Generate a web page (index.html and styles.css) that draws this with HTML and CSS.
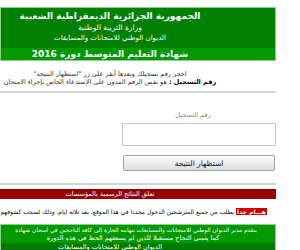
FILE: index.html
```html
<!DOCTYPE html>
<html lang="ar" dir="rtl">
<head>
  <meta charset="UTF-8">
  <title>نتائج شهادة التعليم المتوسط 2016</title>
  <link rel="stylesheet" href="styles.css">
</head>
<body>
  <div class="page">

    <!-- رأس الصفحة -->
    <div class="head">
      <div class="head-top">
        <div class="head-line strong">الجمهورية الجزائرية الديمقراطية الشعبية</div>
        <div class="head-line">وزارة التربية الوطنية</div>
        <div class="head-line small">الديوان الوطني للامتحانات والمسابقات</div>
      </div>
      <div class="head-title">شهادة التعليم المتوسط دورة 2016</div>
    </div>

    <div class="intro">
      <div>احجز رقم تسجيلك وبعدها أنقر على زر "استظهار النتيجة"</div>
      <div><b>رقم التسجيل :</b> هو نفس الرقم المدون على الإستدعاء الخاص بإجراء الامتحان</div>
    </div>

    <div class="sep"></div>

    <!-- البحث -->
    <form class="lookup" onsubmit="return false;">
      <label class="lookup-label" for="regNum">رقم التسجيل</label>
      <input type="text" id="regNum" class="lookup-input">
      <button class="lookup-btn">استظهار النتيجة</button>
    </form>

    <div class="sep"></div>

    <div class="notice-bar">تعلق النتائج الرسمية بالمؤسسات</div>

    <p class="alert"><span class="tag">هـــام جدا</span> يطلب من جميع المترشحين الدخول مجددا في هذا الموقع، بعد ثلاثة ايام، وذلك لسحب كشوفهم</p>

    <div class="news">
      <div class="news-body">
        <div class="news-line wide">يتقدم مدير الديوان الوطني للامتحانات والمسابقات بتهانيه الحارة إلى كافة الناجحين في امتحان شهادة</div>
        <div class="news-line">كما يتمنى النجاح مستقبلا للذين لم يسعفهم الحظ في هذه الدورة</div>
      </div>
      <div class="news-sign">الديوان الوطني للامتحانات والمسابقات</div>
    </div>

  </div>
</body>
</html>
```

FILE: styles.css
```css
body {
  font-family: 'DejaVu Sans', sans-serif;
  margin: 0;
  padding: 0;
  background: white;
  color: #222;
  font-size: 7px;
  overflow: hidden;
}
.page {
  width: 276px;
  margin: 7px auto 0 0;
}
.head {
  border: 1px solid #8fcf8f;
  color: white;
  text-align: center;
}
.head-top {
  background-color: #008000;
  padding: 3px 0 4px 0;
}
.head-line {
  padding-right: 56px;
  line-height: 11px;
  font-size: 7.5px;
}
.head-line.strong {
  font-weight: bold;
  font-size: 9px;
}
.head-line.small {
  font-size: 7px;
}
.head-title {
  background-color: #009900;
  padding-right: 56px;
  font-weight: bold;
  font-size: 9px;
  line-height: 12px;
}
.intro {
  padding: 9px 56px 0 0;
  text-align: center;
  font-size: 6.5px;
  line-height: 8px;
  color: #333;
}
.intro b {
  color: #000;
}
.sep {
  height: 2px;
  background-color: #d4d4d4;
  margin-top: 5px;
}
.lookup {
  width: 154px;
  margin: 18px 0 0 33px;
  text-align: center;
}
.lookup-label {
  display: block;
  color: #888;
  font-size: 6.5px;
  line-height: 9px;
  margin-right: 12px;
}
.lookup-input {
  display: block;
  box-sizing: border-box;
  width: 154px;
  height: 23px;
  margin: 3px 0 0 0;
  border: 1px solid #c8c8c8;
  padding: 0;
}
.lookup-btn {
  display: block;
  box-sizing: border-box;
  width: 152px;
  height: 16px;
  margin: 9px 1px 0 0;
  border: 1px solid #a0a0a0;
  border-radius: 2px;
  background: linear-gradient(to bottom, #fdfdfd, #dcdcdc);
  font-family: 'DejaVu Sans', sans-serif;
  font-size: 7.5px;
  color: #111;
  padding: 0;
}
.lookup + .sep {
  margin-top: 12px;
}
.notice-bar {
  background-color: #990000;
  color: white;
  text-align: center;
  padding-right: 56px;
  margin-top: 4px;
  font-size: 6.5px;
  line-height: 10px;
}
.alert {
  margin: 9px 9px 0 0;
  font-size: 6px;
  line-height: 8px;
  color: #000;
  white-space: nowrap;
}
.tag {
  background-color: #cc0000;
  color: white;
  font-weight: bold;
  padding: 0 1px;
}
.news {
  border: 1px solid #8fcf8f;
  margin-top: 8px;
  color: white;
  text-align: center;
  font-size: 6.5px;
}
.news-body {
  background-color: #009900;
  padding: 1px 0;
  overflow: hidden;
}
.news-line {
  white-space: nowrap;
  line-height: 8px;
  padding-right: 10px;
}
.news-line.wide {
  font-size: 5.8px;
  padding-right: 4px;
}
.news-sign {
  background-color: #007a00;
  line-height: 8px;
  padding-right: 56px;
}
```
